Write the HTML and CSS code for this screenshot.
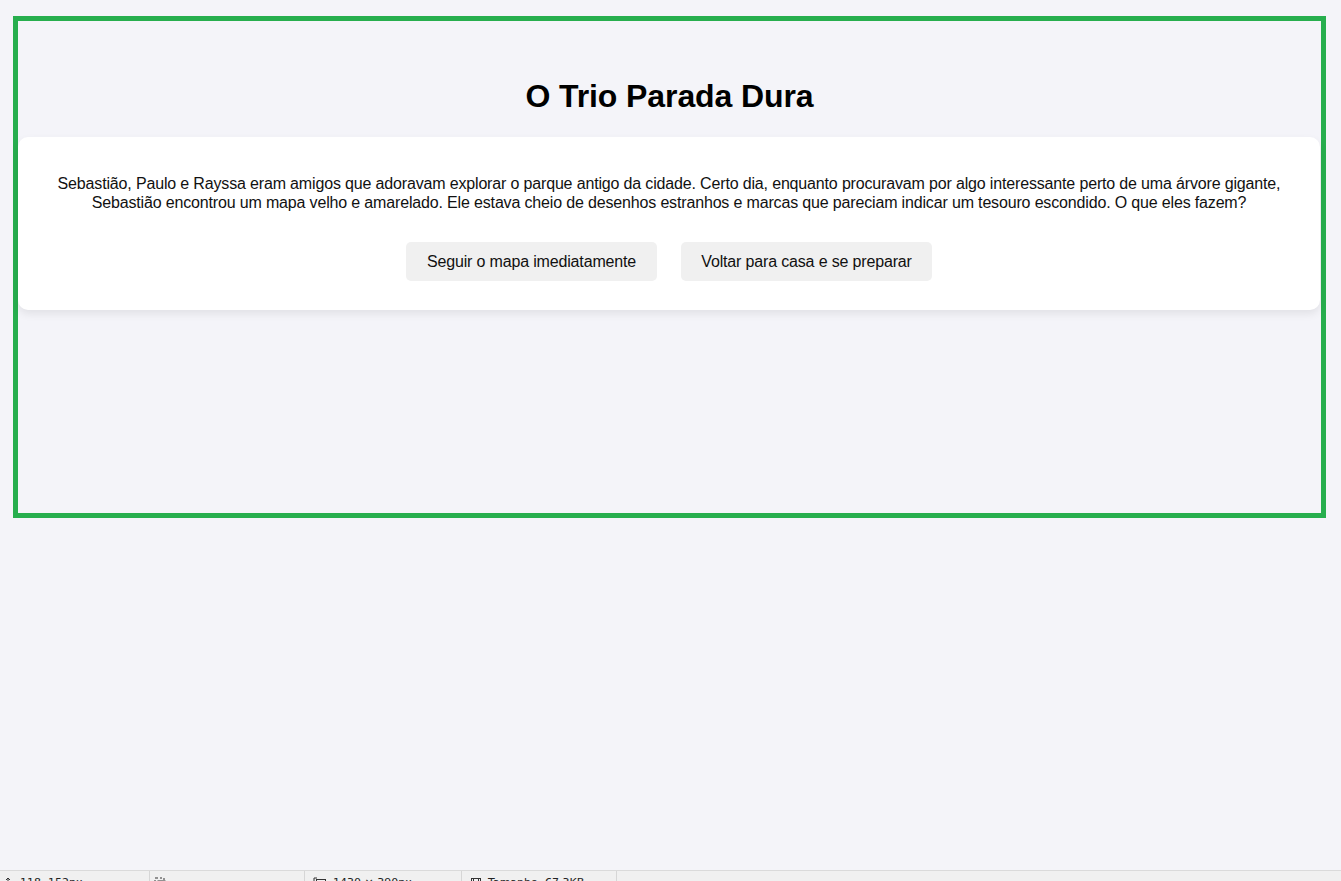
FILE: index.html
```html
<!DOCTYPE html>
<html lang="pt-BR">
<head>
<meta charset="utf-8">
<title>O Trio Parada Dura</title>
<link rel="stylesheet" href="styles.css">
</head>
<body>
<div class="page">
  <div class="frame">
    <h1 class="title">O Trio Parada Dura</h1>
    <div class="card">
      <p class="story">Sebastião, Paulo e Rayssa eram amigos que adoravam explorar o parque antigo da cidade. Certo dia, enquanto procuravam por algo interessante perto de uma árvore gigante, Sebastião encontrou um mapa velho e amarelado. Ele estava cheio de desenhos estranhos e marcas que pareciam indicar um tesouro escondido. O que eles fazem?</p>
      <div class="choices">
        <button class="choice">Seguir o mapa imediatamente</button>
        <button class="choice">Voltar para casa e se preparar</button>
      </div>
    </div>
  </div>
</div>
<div class="statusbar">
  <div class="seg seg1">
    <svg class="ico" width="12" height="12" viewBox="0 0 12 12"><path d="M6 1v10M1 6h10M6 1l-2 2M6 1l2 2" stroke="#333" fill="none" stroke-width="1"/></svg>
    <span>118, 152px</span>
  </div>
  <div class="seg seg2">
    <svg class="ico" width="12" height="12" viewBox="0 0 12 12"><path d="M1 1h3M6 1h2M10 1v2M1 3v2M1 7v2" stroke="#333" fill="none" stroke-width="1"/><rect x="4" y="4" width="7" height="7" stroke="#333" fill="none"/></svg>
    <span></span>
  </div>
  <div class="seg seg3">
    <svg class="ico" width="14" height="12" viewBox="0 0 14 12"><path d="M1 1v3M1 1h3" stroke="#333" fill="none"/><rect x="3.5" y="2.5" width="9" height="8" stroke="#333" fill="none"/></svg>
    <span>1430 × 390px</span>
  </div>
  <div class="seg seg4">
    <svg class="ico" width="12" height="12" viewBox="0 0 12 12"><rect x="1.5" y="1.5" width="9" height="9" stroke="#333" fill="none"/><rect x="3.5" y="1.5" width="5" height="3" stroke="#333" fill="none"/></svg>
    <span>Tamanho: 67,3KB</span>
  </div>
  <div class="seg seg5"></div>
</div>
</body>
</html>
```

FILE: styles.css
```css
html, body {
  margin: 0;
  padding: 0;
}

body {
  background: #f4f4f9;
  font-family: "Liberation Sans", Arial, sans-serif;
  color: #222;
  height: 881px;
  display: flex;
  flex-direction: column;
  overflow: hidden;
}

.page {
  flex: 1;
  padding: 16px 15px 0 13px;
}

.frame {
  border: 5px solid #27ae4e;
  height: 456px;
  padding-top: 36px;
  box-sizing: content-box;
  display: flex;
  flex-direction: column;
}

.title {
  margin: 21px 0 22px;
  font-size: 32px;
  font-weight: bold;
  text-align: center;
  color: #000;
  line-height: 37px;
  letter-spacing: -0.1px;
}

.card {
  background: #fff;
  border-radius: 10px;
  box-shadow: 0 4px 8px rgba(0, 0, 0, 0.08);
  padding: 20px;
  margin-right: 1px;
}

.story {
  margin: 17px 0 16px;
  font-size: 16px;
  line-height: 19px;
  text-align: center;
  color: #111;
  letter-spacing: -0.16px;
}

.choices {
  display: flex;
  justify-content: center;
  gap: 24px;
  margin-top: 30px;
  margin-bottom: 9px;
}

.choice {
  font-family: "Liberation Sans", Arial, sans-serif;
  font-size: 16px;
  line-height: 19px;
  color: #111;
  background: #f0f0f0;
  border: none;
  border-radius: 5px;
  padding: 10px 0;
  width: 251px;
  white-space: nowrap;
  letter-spacing: -0.16px;
}

.statusbar {
  height: 10px;
  border-top: 1px solid #dadada;
  background: #f0f0f0;
  display: flex;
  overflow: hidden;
  font-family: "DejaVu Sans", sans-serif;
  font-size: 11px;
  color: #222;
}

.seg {
  display: flex;
  align-items: flex-start;
  gap: 6px;
  padding: 5px 0 0 4px;
  border-right: 1px solid #d6d6d6;
  box-sizing: border-box;
  height: 30px;
  line-height: 13px;
}

.seg1 { width: 150px; padding-left: 2px; }
.seg2 { width: 155px; }
.seg3 { width: 157px; padding-left: 8px; }
.seg4 { width: 155px; padding-left: 8px; }
.seg5 { flex: 1; border-right: none; }

.ico {
  flex: none;
  margin-top: 1px;
}
```
